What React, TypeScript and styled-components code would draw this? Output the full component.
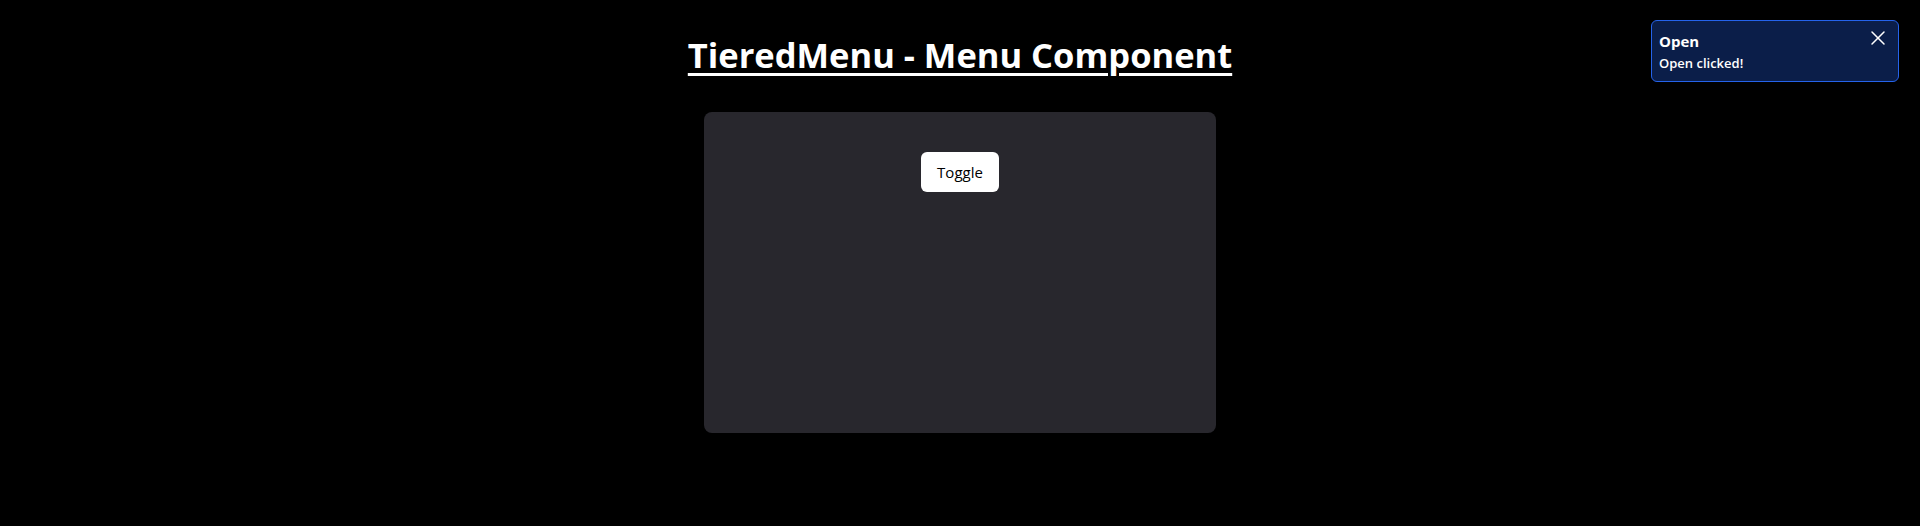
import React, { useState } from 'react';
import styled, { createGlobalStyle } from 'styled-components';
import { X } from 'lucide-react';

const GlobalStyle = createGlobalStyle`
  html, body {
    margin: 0;
    padding: 0;
    background: #000000;
    color: #ffffff;
    font-family: 'Open Sans', 'Noto Sans', sans-serif;
  }
`;

const Page = styled.main`
  min-height: 526px;
  display: flex;
  flex-direction: column;
  align-items: center;
  padding-top: 32px;
  box-sizing: border-box;
`;

const Title = styled.h1`
  margin: 0 0 34px;
  font-size: 34.5px;
  line-height: 46px;
  font-weight: 700;
  text-decoration: underline;
  text-decoration-thickness: 3px;
  text-underline-offset: 5px;
`;

const Panel = styled.section`
  width: 512px;
  height: 321px;
  box-sizing: border-box;
  padding-top: 40px;
  background: #28272d;
  border-radius: 8px;
  display: flex;
  flex-direction: column;
  align-items: center;
`;

const ToggleButton = styled.button`
  height: 40px;
  padding: 0 16px;
  border: none;
  border-radius: 6px;
  background: #ffffff;
  color: #000000;
  font-family: inherit;
  font-size: 15px;
  font-weight: 500;
  cursor: pointer;
`;

const Toast = styled.div`
  position: fixed;
  top: 20px;
  right: 21px;
  width: 248px;
  height: 62px;
  box-sizing: border-box;
  padding: 10px 8px 0 7px;
  background: #0b1e49;
  border: 1px solid #2563eb;
  border-radius: 6px;
  display: flex;
  justify-content: space-between;
  align-items: flex-start;
`;

const ToastText = styled.div`
  display: flex;
  flex-direction: column;
`;

const ToastTitle = styled.span`
  font-size: 15px;
  line-height: 20px;
  font-weight: 700;
`;

const ToastBody = styled.span`
  margin-top: 2px;
  font-size: 13px;
  line-height: 20px;
  font-weight: 600;
`;

const CloseButton = styled.button`
  width: 24px;
  height: 24px;
  margin-top: -5px;
  padding: 0;
  border: none;
  background: transparent;
  color: #ffffff;
  display: flex;
  align-items: center;
  justify-content: center;
  cursor: pointer;
`;

function App() {
  const [open, setOpen] = useState(true);

  return (
    <>
      <GlobalStyle />
      <Page>
        <Title>TieredMenu - Menu Component</Title>
        <Panel>
          <ToggleButton onClick={() => setOpen(true)}>Toggle</ToggleButton>
        </Panel>
      </Page>
      {open && (
        <Toast>
          <ToastText>
            <ToastTitle>Open</ToastTitle>
            <ToastBody>Open clicked!</ToastBody>
          </ToastText>
          <CloseButton onClick={() => setOpen(false)}>
            <X size={24} strokeWidth={1.5} />
          </CloseButton>
        </Toast>
      )}
    </>
  );
}

export default App;
